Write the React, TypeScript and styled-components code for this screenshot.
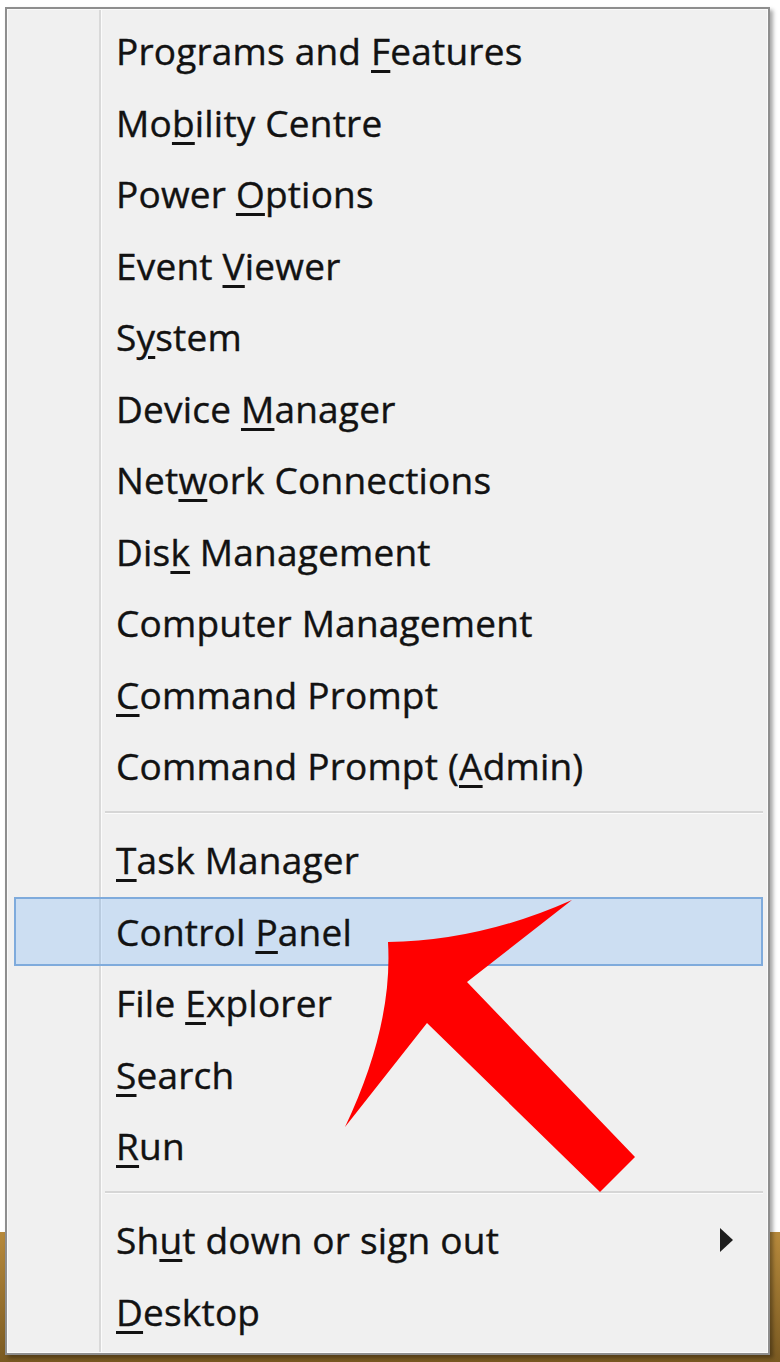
import React from 'react';
import styled, { createGlobalStyle } from 'styled-components';

type Entry = { before: string; key: string; after: string; selected?: boolean; submenu?: boolean };

const groups: Entry[][] = [
  [
    { before: 'Programs and ', key: 'F', after: 'eatures' },
    { before: 'Mo', key: 'b', after: 'ility Centre' },
    { before: 'Power ', key: 'O', after: 'ptions' },
    { before: 'Event ', key: 'V', after: 'iewer' },
    { before: 'S', key: 'y', after: 'stem' },
    { before: 'Device ', key: 'M', after: 'anager' },
    { before: 'Net', key: 'w', after: 'ork Connections' },
    { before: 'Dis', key: 'k', after: ' Management' },
    { before: 'Computer Mana', key: 'g', after: 'ement' },
    { before: '', key: 'C', after: 'ommand Prompt' },
    { before: 'Command Prompt (', key: 'A', after: 'dmin)' },
  ],
  [
    { before: '', key: 'T', after: 'ask Manager' },
    { before: 'Control ', key: 'P', after: 'anel', selected: true },
    { before: 'File ', key: 'E', after: 'xplorer' },
    { before: '', key: 'S', after: 'earch' },
    { before: '', key: 'R', after: 'un' },
  ],
  [
    { before: 'Sh', key: 'u', after: 't down or sign out', submenu: true },
    { before: '', key: 'D', after: 'esktop' },
  ],
];

const GlobalStyle = createGlobalStyle`
  html, body {
    margin: 0;
    padding: 0;
    background: #ffffff;
  }
`;

const Screen = styled.div`
  position: relative;
  width: 780px;
  height: 1362px;
  overflow: hidden;
  padding: 7px 0 0 5px;
  box-sizing: border-box;
  background: linear-gradient(to bottom, #ffffff 0, #ffffff 1232px, #b78a3c 1232px, #7a5a22 100%);
`;

const Menu = styled.div`
  width: 765px;
  height: 1348px;
  box-sizing: border-box;
  border: 2px solid #8e8e8e;
  box-shadow: inset 0 0 0 1px #fafafa, 3px 3px 4px rgba(0, 0, 0, 0.35);
  padding: 6px 0 5px;
  display: flex;
  flex-direction: column;
  background: linear-gradient(
    to right,
    #f0f0f0 0,
    #f0f0f0 92px,
    #d9d9d9 92px,
    #d9d9d9 94px,
    #fbfbfb 94px,
    #fbfbfb 95px,
    #f0f0f0 95px
  );
  font-family: 'Open Sans', 'Noto Sans', 'Liberation Sans', sans-serif;
`;

const Item = styled.div<{ $selected?: boolean }>`
  height: 69.5px;
  margin: 1px 5px 1px 7px;
  box-sizing: border-box;
  border: 2px solid ${(p) => (p.$selected ? '#7fabdc' : 'transparent')};
  background: ${(p) => (p.$selected ? 'rgba(60, 150, 250, 0.2)' : 'transparent')};
  padding: 0 28px 0 100px;
  display: flex;
  align-items: center;
  justify-content: space-between;
  font-size: 37px;
  letter-spacing: 0.2px;
  color: #121212;
  -webkit-text-stroke: 0.4px #121212;
  white-space: nowrap;
`;

const Label = styled.span`
  u {
    text-decoration-thickness: 3px;
    text-underline-offset: 5px;
  }
`;

const SubArrow = styled.span`
  width: 0;
  height: 0;
  border-left: 13px solid #1e1e1e;
  border-top: 12px solid transparent;
  border-bottom: 12px solid transparent;
`;

const Separator = styled.div`
  margin: 9px 5px 10.5px 98px;
  border-top: 2px solid #d6d6d6;
  border-bottom: 1px solid #fbfbfb;
`;

const Pointer = styled.svg`
  position: absolute;
  left: 0;
  top: 0;
  pointer-events: none;
`;

export default function App() {
  return (
    <>
      <GlobalStyle />
      <Screen>
        <Menu>
          {groups.map((group, gi) => (
            <React.Fragment key={gi}>
              {gi > 0 && <Separator />}
              {group.map((e) => (
                <Item key={e.before + e.key} $selected={e.selected}>
                  <Label>
                    {e.before}
                    <u>{e.key}</u>
                    {e.after}
                  </Label>
                  {e.submenu && <SubArrow />}
                </Item>
              ))}
            </React.Fragment>
          ))}
        </Menu>
        <Pointer width="780" height="1362" viewBox="0 0 780 1362">
          <path
            d="M388 942 Q480 941 572 900 L467 982 L635 1157 L600 1192 L427 1023 L345 1127 Q393 1026 388 942 Z"
            fill="#ff0000"
          />
        </Pointer>
      </Screen>
    </>
  );
}
